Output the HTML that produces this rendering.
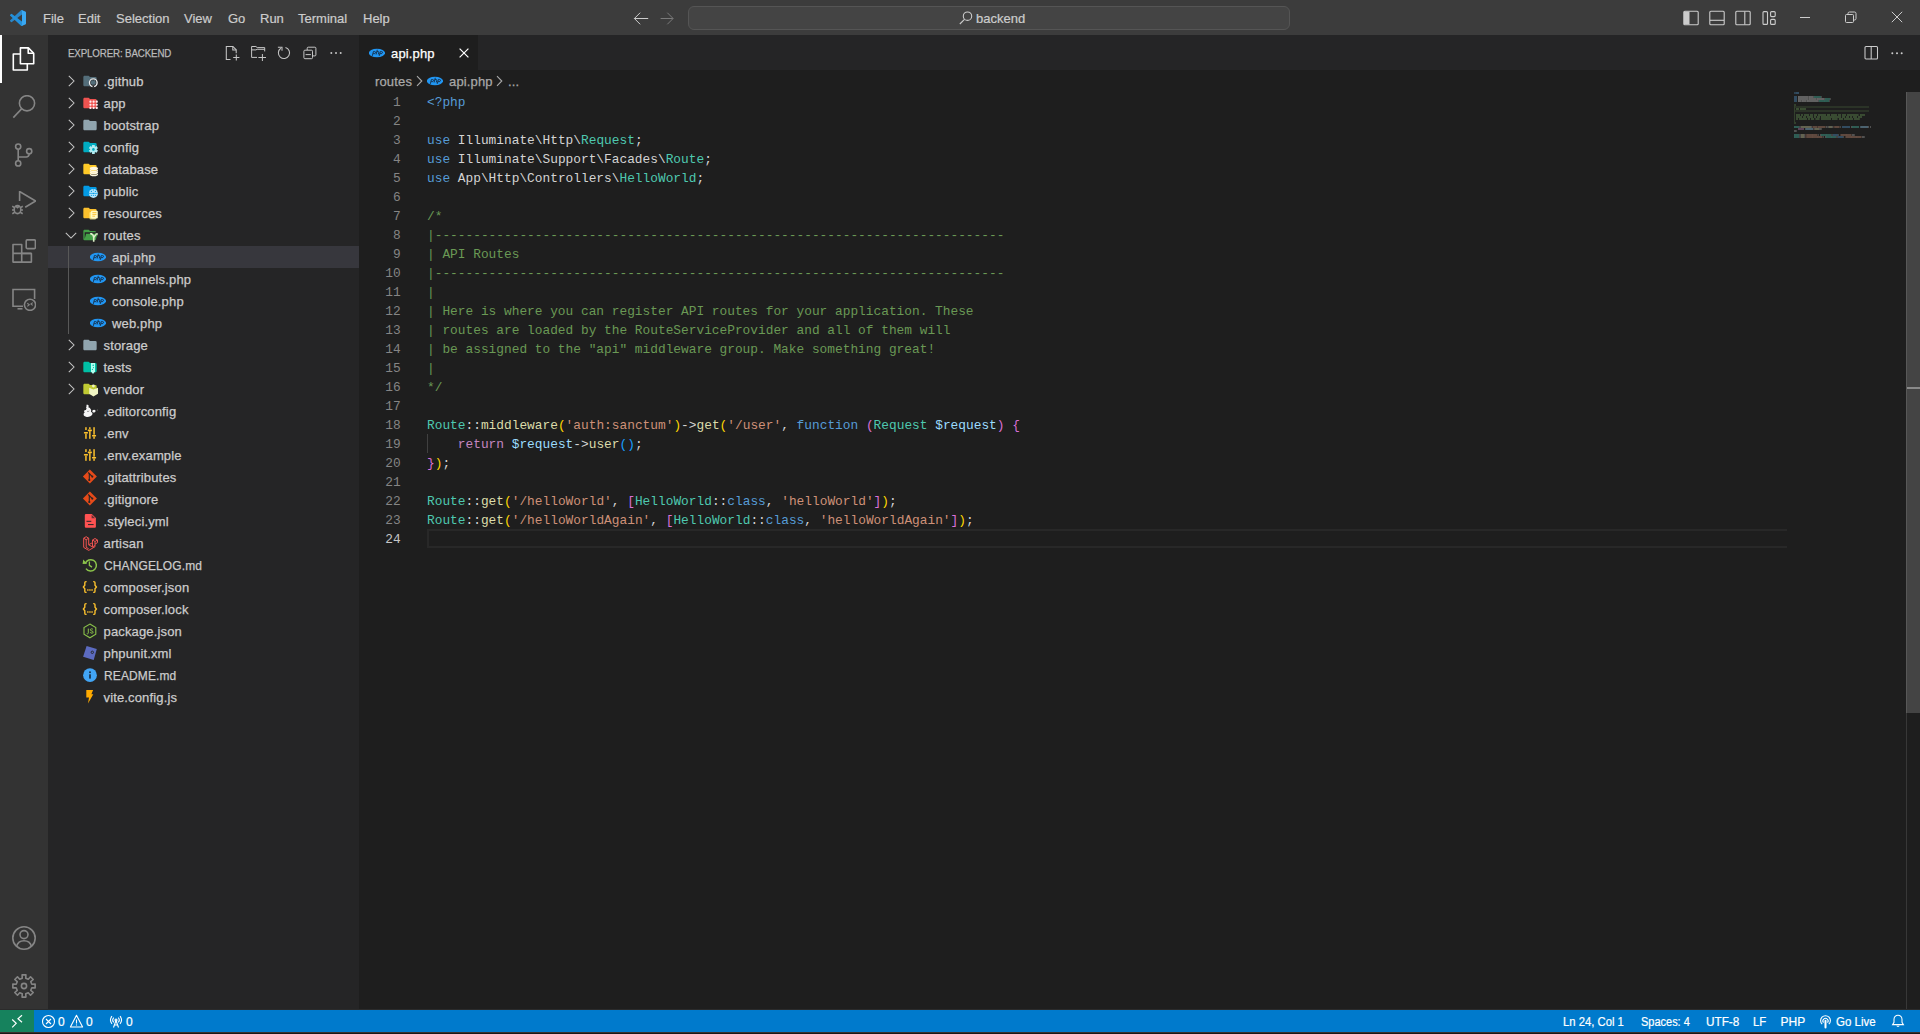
<!DOCTYPE html><html><head><meta charset="utf-8"><title>api.php - backend</title><style>
*{margin:0;padding:0;box-sizing:border-box}
html,body{width:1920px;height:1034px;overflow:hidden;background:#1e1e1e;font-family:"Liberation Sans",sans-serif;font-size:13px;color:#cccccc}
div,span,svg{position:absolute}
.t{white-space:pre}
#title{left:0;top:0;width:1920px;height:35px;background:#3c3c3c}
#act{left:0;top:35px;width:48px;height:974px;background:#333333}
#side{left:48px;top:35px;width:311px;height:974px;background:#252526}
#sash{left:359px;top:35px;width:1px;height:974px;background:#1e1e1e}
#editor{left:360px;top:35px;width:1560px;height:974px;background:#1e1e1e}
#status{left:0;top:1010px;width:1920px;height:22px;background:#007acc;color:#fff;font-size:12px}
#bottom{left:0;top:1032px;width:1920px;height:2px;background:#181818;border-top:1px solid #3a322e}
#sline{left:0;top:1009px;width:1920px;height:1px;background:#2b2b2b}
.menu{top:1px;height:35px;line-height:36px;color:#cccccc;font-size:13px;white-space:pre;-webkit-text-stroke:0.2px currentColor}
.lbl{height:22px;line-height:22px;color:#cccccc;font-size:13px;white-space:pre;-webkit-text-stroke:0.25px currentColor;letter-spacing:0.15px}
.code{font-family:"Liberation Mono",monospace;font-size:12.83px;white-space:pre;line-height:19px;height:19px}
.ln{width:41px;text-align:right;color:#858585;font-family:"Liberation Mono",monospace;font-size:12.83px;line-height:19px;height:19px}
.st{top:0;height:22px;line-height:23px;white-space:pre;color:#fff;font-size:12px;-webkit-text-stroke:0.2px currentColor}
</style></head><body>
<div id="title">
<svg style="left:10px;top:10px" width="16" height="16" viewBox="0 0 100 100">
<path fill="#2a86c8" d="M96.46 10.8L75.86.87a6.23 6.23 0 0 0-7.1 1.2L1.3 63.6a4.16 4.16 0 0 0 0 6.16l5.5 5a4.16 4.16 0 0 0 5.32.24L93.3 13.4a4.13 4.13 0 0 1 6.7 3.2v-.24a6.25 6.25 0 0 0-3.54-5.56z"/>
<path fill="#2291dd" d="M96.46 89.2L75.86 99.13a6.23 6.23 0 0 1-7.1-1.2L1.3 36.4a4.16 4.16 0 0 1 0-6.16l5.5-5a4.16 4.16 0 0 1 5.32-.24L93.3 86.6a4.13 4.13 0 0 0 6.7-3.2v.24a6.25 6.25 0 0 1-3.54 5.56z"/>
<path fill="#3aa8f2" d="M75.86 99.13a6.24 6.24 0 0 1-7.1-1.2c2.3 2.3 6.24.67 6.24-2.58V4.65c0-3.25-3.94-4.88-6.24-2.58a6.24 6.24 0 0 1 7.1-1.2l20.6 9.9A6.25 6.25 0 0 1 100 16.3v67.4a6.25 6.25 0 0 1-3.54 5.63z"/>
</svg>
<div class="menu" style="left:43px">File</div>
<div class="menu" style="left:78px">Edit</div>
<div class="menu" style="left:116px">Selection</div>
<div class="menu" style="left:184px">View</div>
<div class="menu" style="left:228px">Go</div>
<div class="menu" style="left:260px">Run</div>
<div class="menu" style="left:298px">Terminal</div>
<div class="menu" style="left:363px">Help</div>
<svg style="left:632px;top:10px" width="18" height="18" viewBox="0 0 18 18" fill="none" stroke="#cccccc" stroke-width="1">
<path d="M2.2 8.5h14M8.2 2.7L2.4 8.5l5.8 5.8"/></svg>
<svg style="left:659px;top:10px" width="18" height="18" viewBox="0 0 18 18" fill="none" stroke="#7a7a7a" stroke-width="1">
<path d="M1.6 8.5h12.3M8.3 2.7l5.8 5.8-5.8 5.8"/></svg>
<div style="left:688px;top:6px;width:602px;height:24px;border:1px solid #555555;border-radius:6px;background:#444444"></div>
<svg style="left:958px;top:10px" width="16" height="16" viewBox="0 0 16 16" fill="none" stroke="#cccccc" stroke-width="1.1">
<circle cx="9.5" cy="6.2" r="4.2"/><path d="M6.5 9.3L1.8 14"/></svg>
<div class="menu" style="left:976px;color:#cccccc">backend</div>
<svg style="left:1682px;top:10px" width="18" height="16" viewBox="0 0 18 16">
<rect x="1.8" y="1.3" width="14.4" height="13.4" rx="1" fill="none" stroke="#cccccc" stroke-width="1.1"/>
<rect x="2" y="1.6" width="5.5" height="12.8" fill="#cccccc"/></svg>
<svg style="left:1708px;top:10px" width="18" height="16" viewBox="0 0 18 16" fill="none" stroke="#cccccc" stroke-width="1.1">
<rect x="1.8" y="1.3" width="14.4" height="13.4" rx="1"/><path d="M2 10.3h14"/></svg>
<svg style="left:1734px;top:10px" width="18" height="16" viewBox="0 0 18 16" fill="none" stroke="#cccccc" stroke-width="1.1">
<rect x="1.8" y="1.3" width="14.4" height="13.4" rx="1"/><path d="M10.8 1.5v13"/></svg>
<svg style="left:1761px;top:10px" width="18" height="16" viewBox="0 0 18 16" fill="none" stroke="#cccccc" stroke-width="1.1">
<rect x="2" y="1.6" width="4.5" height="12.8" rx="1"/><rect x="9.6" y="1.6" width="4.6" height="5" rx="1"/><rect x="9.6" y="9.4" width="4.6" height="5" rx="1"/></svg>
<div style="left:1800px;top:17px;width:10px;height:1px;background:#cccccc"></div>
<svg style="left:1844px;top:10px" width="14" height="14" viewBox="0 0 14 14" fill="none" stroke="#cccccc" stroke-width="1">
<rect x="1.5" y="4.5" width="8" height="8" rx="1"/><path d="M4 4.5V3.5a1.5 1.5 0 0 1 1.5-1.5h5A1.5 1.5 0 0 1 12 3.5v5a1.5 1.5 0 0 1-1.5 1.5H9.5"/></svg>
<svg style="left:1891px;top:11px" width="12" height="12" viewBox="0 0 12 12" fill="none" stroke="#cccccc" stroke-width="1">
<path d="M0.8 0.8L11.2 11.2M11.2 0.8L0.8 11.2"/></svg>
</div>
<div id="act">
<div style="left:0;top:0;width:2px;height:48px;background:#ffffff"></div>
<svg style="left:12px;top:12px" width="24" height="24" viewBox="0 0 24 24" fill="none" stroke="#ffffff" stroke-width="1.6" stroke-linejoin="round">
<path d="M8.4 16.8V0.9h8l5.3 5.3v10.6z"/><path d="M16.2 1v5.3h5.4"/><path d="M8.4 7H1.3v16h14v-6.2"/></svg>
<svg style="left:12px;top:60px" width="24" height="24" viewBox="0 0 24 24" fill="none" stroke="#858585" stroke-width="1.6">
<circle cx="15" cy="8.3" r="7.6"/><path d="M9.6 13.9L1.3 22.6"/></svg>
<svg style="left:12px;top:108px" width="24" height="24" viewBox="0 0 24 24" fill="none" stroke="#858585" stroke-width="1.6">
<circle cx="6.2" cy="3.6" r="2.6"/><circle cx="17.2" cy="8.2" r="2.6"/><circle cx="6.2" cy="20.4" r="2.6"/>
<path d="M6.2 6.2V17.8"/><path d="M17.2 10.8v0.2a3 3 0 0 1-3 3H6.2"/></svg>
<svg style="left:12px;top:156px" width="24" height="24" viewBox="0 0 24 24" fill="none" stroke="#858585" stroke-width="1.6" stroke-linejoin="round">
<path d="M7.6 10V0.5L23.6 10 13.2 16.3"/>
<ellipse cx="5.5" cy="18.6" rx="3.3" ry="4"/><path d="M0.2 15.2l2.3 1.4M10.8 15.2l-2.3 1.4M0 19h2.2M11 19H8.8M0.3 22.8l2.4-1.5M10.7 22.8l-2.4-1.5M3.6 14.8l1.9 1.8 1.9-1.8"/></svg>
<svg style="left:12px;top:204px" width="24" height="24" viewBox="0 0 24 24" fill="none" stroke="#858585" stroke-width="1.6" stroke-linejoin="round">
<path d="M1 5.5h8.7v9h9.7v8.6H1z"/><path d="M1 14.4h18.4M9.7 14.4v8.7"/><rect x="14.2" y="0.9" width="9.2" height="8.7" rx="1"/></svg>
<svg style="left:12px;top:252px" width="24" height="24" viewBox="0 0 24 24" fill="none" stroke="#858585" stroke-width="1.6">
<path d="M11 19.2H1V2.5h21.6v9.5"/><path d="M5.5 21.8h5"/><circle cx="18" cy="17.8" r="5.6"/>
<path d="M15.3 16.2l2 1.6-2 1.6M20.7 15.6l-1.8 1.4 1.8 1.4" stroke-width="1.1"/></svg>
<svg style="left:12px;top:891px" width="24" height="24" viewBox="0 0 24 24" fill="none" stroke="#858585" stroke-width="1.6">
<circle cx="12" cy="12" r="11.2"/><circle cx="12" cy="8.6" r="4"/><path d="M4.5 20.5c1-3.8 3.8-5.8 7.5-5.8s6.5 2 7.5 5.8"/></svg>
<svg style="left:12px;top:939px" width="24" height="24" viewBox="0 0 24 24" fill="none" stroke="#858585" stroke-width="1.6" stroke-linejoin="round">
<path d="M19.81 10.25 L23.14 10.09 L23.14 13.91 L19.81 13.75 L18.76 16.29 L21.23 18.52 L18.52 21.23 L16.29 18.76 L13.75 19.81 L13.91 23.14 L10.09 23.14 L10.25 19.81 L7.71 18.76 L5.48 21.23 L2.77 18.52 L5.24 16.29 L4.19 13.75 L0.86 13.91 L0.86 10.09 L4.19 10.25 L5.24 7.71 L2.77 5.48 L5.48 2.77 L7.71 5.24 L10.25 4.19 L10.09 0.86 L13.91 0.86 L13.75 4.19 L16.29 5.24 L18.52 2.77 L21.23 5.48 L18.76 7.71Z"/><circle cx="12" cy="12" r="2.6"/></svg>
</div>
<div id="side">
<div class="lbl t" style="left:20px;top:7px;font-size:11px;letter-spacing:-0.15px;transform:scaleX(0.885);transform-origin:0 0;color:#bbbbbb">EXPLORER: BACKEND</div>
<svg style="left:176px;top:10px" width="16" height="16" viewBox="0 0 16 16" fill="none" stroke="#c5c5c5" stroke-width="1.05">
<path d="M6.5 14.5H2.3V1.5h6.6l3.3 3.3v3.4"/><path d="M8.8 1.5v3.4h3.4"/><path d="M12.3 9.4v6.2M9.2 12.5h6.2"/></svg>
<svg style="left:202px;top:10px" width="16" height="16" viewBox="0 0 16 16" fill="none" stroke="#c5c5c5" stroke-width="1">
<path d="M7 12.4H1.6V1.5h4.3l1.3 1.1h7.5v3.8"/><path d="M1.6 4.9h4.3l1.3-0.6h7.5"/><path d="M12.4 9v7M8.4 12.5h8"/></svg>
<svg style="left:228px;top:10px" width="16" height="16" viewBox="0 0 16 16" fill="none" stroke="#c5c5c5" stroke-width="1.05">
<path d="M9.45 2.5A5.6 5.6 0 1 1 4.8 3.3"/><path d="M1.9 2.3H6v3.5"/></svg>
<svg style="left:254px;top:10px" width="16" height="16" viewBox="0 0 16 16" fill="none" stroke="#c5c5c5" stroke-width="1">
<path d="M5.2 5V3.2a1 1 0 0 1 1-1h6.7a1 1 0 0 1 1 1v6.7a1 1 0 0 1-1 1H10.5"/><rect x="1.9" y="5.2" width="8.6" height="8.5" rx="1"/><path d="M3.6 9.6h5.3"/></svg>
<svg style="left:280px;top:10px" width="16" height="16" viewBox="0 0 16 16" fill="#c5c5c5">
<circle cx="3.3" cy="8" r="1"/><circle cx="8" cy="8" r="1"/><circle cx="12.7" cy="8" r="1"/></svg>
<div style="left:15px;top:38px;width:16px;height:16px"><svg width="16" height="16" viewBox="0 0 16 16" fill="none" stroke="#c5c5c5" stroke-width="1.05"><path d="M5.8 2.8L11 8l-5.2 5.2"/></svg></div>
<div style="left:34px;top:38px;width:16px;height:16px"><svg width="16" height="16" viewBox="0 0 24 24"><path fill="#546e7a" d="M10 4H4c-1.11 0-2 .89-2 2v12c0 1.097.903 2 2 2h16c1.097 0 2-.903 2-2V8a2 2 0 0 0-2-2h-8l-2-2z"/><g transform="scale(1.5)"><circle cx="11.3" cy="9.9" r="4.5" fill="#252526"/><circle cx="11.3" cy="9.7" r="3.8" fill="none" stroke="#eceff1" stroke-width="1.4"/><path d="M9.3 8.2l0.2-1.6 1.1 0.9h1.4l1.1-0.9 0.2 1.6c0.4 0.5 0.5 1 0.5 1.5 0 1.4-1 2-2.5 2s-2.5-0.6-2.5-2c0-0.5 0.1-1 0.5-1.5z" fill="#546e7a"/><rect x="10.5" y="12.6" width="1.6" height="2" fill="#252526"/></g></svg></div>
<div class="lbl" style="left:55.5px;top:36px">.github</div>
<div style="left:15px;top:60px;width:16px;height:16px"><svg width="16" height="16" viewBox="0 0 16 16" fill="none" stroke="#c5c5c5" stroke-width="1.05"><path d="M5.8 2.8L11 8l-5.2 5.2"/></svg></div>
<div style="left:34px;top:60px;width:16px;height:16px"><svg width="16" height="16" viewBox="0 0 24 24"><path fill="#ef5350" d="M10 4H4c-1.11 0-2 .89-2 2v12c0 1.097.903 2 2 2h16c1.097 0 2-.903 2-2V8a2 2 0 0 0-2-2h-8l-2-2z"/><g transform="scale(1.5)"><rect x="7.40" y="5.60" width="2.1" height="2.1" rx="0.7" fill="#ffebee"/><rect x="7.40" y="8.70" width="2.1" height="2.1" rx="0.7" fill="#ffebee"/><rect x="7.40" y="11.80" width="2.1" height="2.1" rx="0.7" fill="#ffebee"/><rect x="10.55" y="5.60" width="2.1" height="2.1" rx="0.7" fill="#ffebee"/><rect x="10.55" y="8.70" width="2.1" height="2.1" rx="0.7" fill="#ffebee"/><rect x="10.55" y="11.80" width="2.1" height="2.1" rx="0.7" fill="#ffebee"/><rect x="13.70" y="5.60" width="2.1" height="2.1" rx="0.7" fill="#ffebee"/><rect x="13.70" y="8.70" width="2.1" height="2.1" rx="0.7" fill="#ffebee"/><rect x="13.70" y="11.80" width="2.1" height="2.1" rx="0.7" fill="#ffebee"/></g></svg></div>
<div class="lbl" style="left:55.5px;top:58px">app</div>
<div style="left:15px;top:82px;width:16px;height:16px"><svg width="16" height="16" viewBox="0 0 16 16" fill="none" stroke="#c5c5c5" stroke-width="1.05"><path d="M5.8 2.8L11 8l-5.2 5.2"/></svg></div>
<div style="left:34px;top:82px;width:16px;height:16px"><svg width="16" height="16" viewBox="0 0 24 24"><path fill="#90a4ae" d="M10 4H4c-1.11 0-2 .89-2 2v12c0 1.097.903 2 2 2h16c1.097 0 2-.903 2-2V8a2 2 0 0 0-2-2h-8l-2-2z"/></svg></div>
<div class="lbl" style="left:55.5px;top:80px">bootstrap</div>
<div style="left:15px;top:104px;width:16px;height:16px"><svg width="16" height="16" viewBox="0 0 16 16" fill="none" stroke="#c5c5c5" stroke-width="1.05"><path d="M5.8 2.8L11 8l-5.2 5.2"/></svg></div>
<div style="left:34px;top:104px;width:16px;height:16px"><svg width="16" height="16" viewBox="0 0 24 24"><path fill="#00acc1" d="M10 4H4c-1.11 0-2 .89-2 2v12c0 1.097.903 2 2 2h16c1.097 0 2-.903 2-2V8a2 2 0 0 0-2-2h-8l-2-2z"/><g transform="scale(1.5)"><path d="M10.10 7.37 L10.01 5.91 L12.79 5.91 L12.70 7.37 L13.38 7.76 L14.59 6.95 L15.98 9.36 L14.68 10.01 L14.68 10.79 L15.98 11.44 L14.59 13.85 L13.38 13.04 L12.70 13.43 L12.79 14.89 L10.01 14.89 L10.10 13.43 L9.42 13.04 L8.21 13.85 L6.82 11.44 L8.12 10.79 L8.12 10.01 L6.82 9.36 L8.21 6.95 L9.42 7.76Z" fill="#b2ebf2"/><circle cx="11.4" cy="10.4" r="1.3" fill="#00acc1"/></g></svg></div>
<div class="lbl" style="left:55.5px;top:102px">config</div>
<div style="left:15px;top:126px;width:16px;height:16px"><svg width="16" height="16" viewBox="0 0 16 16" fill="none" stroke="#c5c5c5" stroke-width="1.05"><path d="M5.8 2.8L11 8l-5.2 5.2"/></svg></div>
<div style="left:34px;top:126px;width:16px;height:16px"><svg width="16" height="16" viewBox="0 0 24 24"><path fill="#ffca28" d="M10 4H4c-1.11 0-2 .89-2 2v12c0 1.097.903 2 2 2h16c1.097 0 2-.903 2-2V8a2 2 0 0 0-2-2h-8l-2-2z"/><g transform="scale(1.5)"><ellipse cx="11.9" cy="7.6" rx="4.1" ry="1.8" fill="#fff8e1"/><path d="M7.8 10v1.4c0 1 1.8 1.8 4.1 1.8s4.1-0.8 4.1-1.8V10c-0.8 0.8-2.4 1.3-4.1 1.3S8.6 10.8 7.8 10z" fill="#fff8e1"/><path d="M7.8 8.6v1c0 1 1.8 1.8 4.1 1.8s4.1-0.8 4.1-1.8v-1c-0.8 0.8-2.4 1.3-4.1 1.3S8.6 9.4 7.8 8.6z" fill="#fff8e1"/><path d="M7.8 12.4v1c0 1 1.8 1.8 4.1 1.8s4.1-0.8 4.1-1.8v-1c-0.8 0.8-2.4 1.3-4.1 1.3S8.6 13.2 7.8 12.4z" fill="#fff8e1"/></g></svg></div>
<div class="lbl" style="left:55.5px;top:124px">database</div>
<div style="left:15px;top:148px;width:16px;height:16px"><svg width="16" height="16" viewBox="0 0 16 16" fill="none" stroke="#c5c5c5" stroke-width="1.05"><path d="M5.8 2.8L11 8l-5.2 5.2"/></svg></div>
<div style="left:34px;top:148px;width:16px;height:16px"><svg width="16" height="16" viewBox="0 0 24 24"><path fill="#039be5" d="M10 4H4c-1.11 0-2 .89-2 2v12c0 1.097.903 2 2 2h16c1.097 0 2-.903 2-2V8a2 2 0 0 0-2-2h-8l-2-2z"/><g transform="scale(1.5)"><circle cx="11.4" cy="10.4" r="4.5" fill="#b3e5fc"/><path d="M6.9 10.4h9M11.4 6.2v1.6" stroke="#039be5" stroke-width="0.7" fill="none"/><circle cx="9.4" cy="8.4" r="0.6" fill="#039be5"/><circle cx="13.4" cy="8.4" r="0.6" fill="#039be5"/><circle cx="9.4" cy="12.3" r="0.6" fill="#039be5"/><circle cx="11.4" cy="12.3" r="0.6" fill="#039be5"/><circle cx="13.4" cy="12.3" r="0.6" fill="#039be5"/><circle cx="11.4" cy="10.4" r="0.6" fill="#039be5"/></g></svg></div>
<div class="lbl" style="left:55.5px;top:146px">public</div>
<div style="left:15px;top:170px;width:16px;height:16px"><svg width="16" height="16" viewBox="0 0 16 16" fill="none" stroke="#c5c5c5" stroke-width="1.05"><path d="M5.8 2.8L11 8l-5.2 5.2"/></svg></div>
<div style="left:34px;top:170px;width:16px;height:16px"><svg width="16" height="16" viewBox="0 0 24 24"><path fill="#fbc02d" d="M10 4H4c-1.11 0-2 .89-2 2v12c0 1.097.903 2 2 2h16c1.097 0 2-.903 2-2V8a2 2 0 0 0-2-2h-8l-2-2z"/><g transform="scale(1.5)"><rect x="7.5" y="7" width="6.5" height="7.6" rx="1" fill="#fff59d" opacity="0.75"/><rect x="9" y="5.8" width="6.8" height="7.8" rx="1" fill="#fff9c4"/><path d="M10.4 7.6h4M10.4 9.4h4M10.4 11.2h2.6" stroke="#fbc02d" stroke-width="0.9"/></g></svg></div>
<div class="lbl" style="left:55.5px;top:168px">resources</div>
<div style="left:15px;top:192px;width:16px;height:16px"><svg width="16" height="16" viewBox="0 0 16 16" fill="none" stroke="#c5c5c5" stroke-width="1.05"><path d="M2.8 5.8L8 11l5.2-5.2"/></svg></div>
<div style="left:34px;top:192px;width:16px;height:16px"><svg width="16" height="16" viewBox="0 0 24 24"><path fill="#43a047" d="M19 20H4a2 2 0 0 1-2-2V6c0-1.11.89-2 2-2h6l2 2h7a2 2 0 0 1 2 2H4v10l2.14-8h17.07l-2.28 8.5c-.23.87-1.01 1.5-1.93 1.5z"/><g transform="scale(1.5)"><path d="M9 6.8c1.6 0.6 2.7 1.8 2.7 3.6v4.3" stroke="#dcedc8" stroke-width="1.6" fill="none"/><path d="M7.9 6h2.6l-1.6 2z" fill="#dcedc8"/><path d="M11.8 10.2l2.2-2.8" stroke="#dcedc8" stroke-width="1.5"/><path d="M15.8 6l-0.4 2.6-2.2-2.2z" fill="#dcedc8"/></g></svg></div>
<div class="lbl" style="left:55.5px;top:190px">routes</div>
<div style="left:0;top:211px;width:311px;height:22px;background:#37373d"></div>
<div style="left:42px;top:214px;width:16px;height:16px"><svg width="16" height="16" viewBox="0 0 16 16"><ellipse cx="7.95" cy="8" rx="8.1" ry="4.2" fill="#2196f3"/><path d="M3.3 10.9L4.4 6.6h1.3c0.7 0 1 0.4 0.85 1-0.15 0.7-0.6 1.1-1.3 1.1H4.1M7.1 9.5L8.3 4.8M7.9 6.6h1.2c0.6 0 0.8 0.3 0.7 0.7L9.3 9.5M10.2 10.9l1.1-4.3h1.3c0.7 0 1 0.4 0.85 1-0.15 0.7-0.6 1.1-1.3 1.1H11" fill="none" stroke="#15263a" stroke-width="0.85"/></svg></div>
<div class="lbl" style="left:64px;top:212px">api.php</div>
<div style="left:42px;top:236px;width:16px;height:16px"><svg width="16" height="16" viewBox="0 0 16 16"><ellipse cx="7.95" cy="8" rx="8.1" ry="4.2" fill="#2196f3"/><path d="M3.3 10.9L4.4 6.6h1.3c0.7 0 1 0.4 0.85 1-0.15 0.7-0.6 1.1-1.3 1.1H4.1M7.1 9.5L8.3 4.8M7.9 6.6h1.2c0.6 0 0.8 0.3 0.7 0.7L9.3 9.5M10.2 10.9l1.1-4.3h1.3c0.7 0 1 0.4 0.85 1-0.15 0.7-0.6 1.1-1.3 1.1H11" fill="none" stroke="#15263a" stroke-width="0.85"/></svg></div>
<div class="lbl" style="left:64px;top:234px">channels.php</div>
<div style="left:42px;top:258px;width:16px;height:16px"><svg width="16" height="16" viewBox="0 0 16 16"><ellipse cx="7.95" cy="8" rx="8.1" ry="4.2" fill="#2196f3"/><path d="M3.3 10.9L4.4 6.6h1.3c0.7 0 1 0.4 0.85 1-0.15 0.7-0.6 1.1-1.3 1.1H4.1M7.1 9.5L8.3 4.8M7.9 6.6h1.2c0.6 0 0.8 0.3 0.7 0.7L9.3 9.5M10.2 10.9l1.1-4.3h1.3c0.7 0 1 0.4 0.85 1-0.15 0.7-0.6 1.1-1.3 1.1H11" fill="none" stroke="#15263a" stroke-width="0.85"/></svg></div>
<div class="lbl" style="left:64px;top:256px">console.php</div>
<div style="left:42px;top:280px;width:16px;height:16px"><svg width="16" height="16" viewBox="0 0 16 16"><ellipse cx="7.95" cy="8" rx="8.1" ry="4.2" fill="#2196f3"/><path d="M3.3 10.9L4.4 6.6h1.3c0.7 0 1 0.4 0.85 1-0.15 0.7-0.6 1.1-1.3 1.1H4.1M7.1 9.5L8.3 4.8M7.9 6.6h1.2c0.6 0 0.8 0.3 0.7 0.7L9.3 9.5M10.2 10.9l1.1-4.3h1.3c0.7 0 1 0.4 0.85 1-0.15 0.7-0.6 1.1-1.3 1.1H11" fill="none" stroke="#15263a" stroke-width="0.85"/></svg></div>
<div class="lbl" style="left:64px;top:278px">web.php</div>
<div style="left:15px;top:302px;width:16px;height:16px"><svg width="16" height="16" viewBox="0 0 16 16" fill="none" stroke="#c5c5c5" stroke-width="1.05"><path d="M5.8 2.8L11 8l-5.2 5.2"/></svg></div>
<div style="left:34px;top:302px;width:16px;height:16px"><svg width="16" height="16" viewBox="0 0 24 24"><path fill="#90a4ae" d="M10 4H4c-1.11 0-2 .89-2 2v12c0 1.097.903 2 2 2h16c1.097 0 2-.903 2-2V8a2 2 0 0 0-2-2h-8l-2-2z"/></svg></div>
<div class="lbl" style="left:55.5px;top:300px">storage</div>
<div style="left:15px;top:324px;width:16px;height:16px"><svg width="16" height="16" viewBox="0 0 16 16" fill="none" stroke="#c5c5c5" stroke-width="1.05"><path d="M5.8 2.8L11 8l-5.2 5.2"/></svg></div>
<div style="left:34px;top:324px;width:16px;height:16px"><svg width="16" height="16" viewBox="0 0 24 24"><path fill="#00bfa5" d="M10 4H4c-1.11 0-2 .89-2 2v12c0 1.097.903 2 2 2h16c1.097 0 2-.903 2-2V8a2 2 0 0 0-2-2h-8l-2-2z"/><g transform="scale(1.5)"><path d="M9 4h4v8.6l-2 2.4-2-2.4z" fill="#b2fef0"/><circle cx="11.2" cy="6.2" r="0.8" fill="#00bfa5"/><circle cx="11.5" cy="8.6" r="0.6" fill="#00bfa5"/><circle cx="10.4" cy="10.4" r="0.6" fill="#00bfa5"/></g></svg></div>
<div class="lbl" style="left:55.5px;top:322px">tests</div>
<div style="left:15px;top:346px;width:16px;height:16px"><svg width="16" height="16" viewBox="0 0 16 16" fill="none" stroke="#c5c5c5" stroke-width="1.05"><path d="M5.8 2.8L11 8l-5.2 5.2"/></svg></div>
<div style="left:34px;top:346px;width:16px;height:16px"><svg width="16" height="16" viewBox="0 0 24 24"><path fill="#c0ca33" d="M10 4H4c-1.11 0-2 .89-2 2v12c0 1.097.903 2 2 2h16c1.097 0 2-.903 2-2V8a2 2 0 0 0-2-2h-8l-2-2z"/><g transform="scale(1.5)"><circle cx="11.4" cy="5" r="1.4" fill="#f0f4c3"/><path d="M7.2 6.8l4.2 1.8 4.6-1.8v6l-4.6 2.6-4.2-2.6z" fill="#f0f4c3"/></g></svg></div>
<div class="lbl" style="left:55.5px;top:344px">vendor</div>
<div style="left:34px;top:368px;width:16px;height:16px"><svg width="16" height="16" viewBox="0 0 16 16"><path d="M4.5 1.8c0.9-0.4 2 0 2.2 1 0.1 0.6-0.1 1.1-0.5 1.5 1.2 0.3 2.2 1.1 2.7 2.1 0.4 0.8 0.4 1.8 0 2.6 1.3 0.1 2 1.4 1.4 2.6-0.8 1.6-3.2 2.5-5.6 2.3-1.9-0.2-3.3-1-3.1-2.6 0.1-0.9 0.7-1.6 1.3-2-0.7-0.3-1-1-0.7-1.6 0.3-0.6 1.1-0.8 1.8-0.5 0-0.6 0.2-1.2 0.6-1.7-0.6-0.6-0.6-1.5-0.1-2z" fill="#f5f5f5"/><path d="M10.6 7.2c0.9-0.9 2.5-0.7 2.9 0.3 0.3 0.8-0.3 1.8-1.3 2-0.9 0.2-1.8-0.3-1.9-1.1z" fill="#f5f5f5"/><circle cx="15.3" cy="7.1" r="0.5" fill="#888"/><path d="M5 8.2c0.8 0.4 1.6 0.3 2.3-0.3" stroke="#444" stroke-width="0.6" fill="none"/></svg></div>
<div class="lbl" style="left:55.5px;top:366px">.editorconfig</div>
<div style="left:34px;top:390px;width:16px;height:16px"><svg width="16" height="16" viewBox="0 0 16 16" fill="#fbc02d"><rect x="3.2" y="2.2" width="1.5" height="2.8"/><rect x="3.2" y="8.5" width="1.5" height="5.3"/><rect x="1.9" y="7" width="4.1" height="1.6" rx="0.4"/><rect x="7.1" y="2.2" width="1.5" height="2"/><rect x="7.1" y="6.1" width="1.5" height="7.7"/><rect x="5.8" y="4.6" width="4.1" height="1.6" rx="0.4"/><rect x="11.3" y="2.2" width="1.5" height="7.5"/><rect x="11.3" y="11.4" width="1.5" height="2.4"/><rect x="10" y="9.9" width="4.1" height="1.6" rx="0.4"/></svg></div>
<div class="lbl" style="left:55.5px;top:388px">.env</div>
<div style="left:34px;top:412px;width:16px;height:16px"><svg width="16" height="16" viewBox="0 0 16 16" fill="#fbc02d"><rect x="3.2" y="2.2" width="1.5" height="2.8"/><rect x="3.2" y="8.5" width="1.5" height="5.3"/><rect x="1.9" y="7" width="4.1" height="1.6" rx="0.4"/><rect x="7.1" y="2.2" width="1.5" height="2"/><rect x="7.1" y="6.1" width="1.5" height="7.7"/><rect x="5.8" y="4.6" width="4.1" height="1.6" rx="0.4"/><rect x="11.3" y="2.2" width="1.5" height="7.5"/><rect x="11.3" y="11.4" width="1.5" height="2.4"/><rect x="10" y="9.9" width="4.1" height="1.6" rx="0.4"/></svg></div>
<div class="lbl" style="left:55.5px;top:410px">.env.example</div>
<div style="left:34px;top:434px;width:16px;height:16px"><svg width="16" height="16" viewBox="0 0 16 16"><path d="M7.9 0.6l7 7-7 7-7-7z" fill="#e64a19"/><path d="M6.2 3.5L9.8 7.1M7.3 4.6v6.2" stroke="#252526" stroke-width="1.1" fill="none"/><circle cx="7.3" cy="11" r="1.1" fill="#252526"/><circle cx="10.3" cy="7.6" r="1.1" fill="#252526"/></svg></div>
<div class="lbl" style="left:55.5px;top:432px">.gitattributes</div>
<div style="left:34px;top:456px;width:16px;height:16px"><svg width="16" height="16" viewBox="0 0 16 16"><path d="M7.9 0.6l7 7-7 7-7-7z" fill="#e64a19"/><path d="M6.2 3.5L9.8 7.1M7.3 4.6v6.2" stroke="#252526" stroke-width="1.1" fill="none"/><circle cx="7.3" cy="11" r="1.1" fill="#252526"/><circle cx="10.3" cy="7.6" r="1.1" fill="#252526"/></svg></div>
<div class="lbl" style="left:55.5px;top:454px">.gitignore</div>
<div style="left:34px;top:478px;width:16px;height:16px"><svg width="16" height="16" viewBox="0 0 16 16"><path d="M4 1h5.8l4.1 4.1v8.6a1 1 0 0 1-1 1H4a1.2 1.2 0 0 1-1.2-1.2V2.2A1.2 1.2 0 0 1 4 1z" fill="#ff5252"/><path d="M4.5 8.3h4.8M6 11.6h5.6" stroke="#252526" stroke-width="1"/><path d="M9.6 1.8v3.5h3.5z" fill="#252526" opacity="0.7"/></svg></div>
<div class="lbl" style="left:55.5px;top:476px">.styleci.yml</div>
<div style="left:34px;top:500px;width:16px;height:16px"><svg width="16" height="16" viewBox="0 0 16 16" fill="none" stroke="#ef5350" stroke-width="1" stroke-linejoin="round"><path d="M1.7 3.2l2.5-1.5 2.5 1.5v6.6l3.8-2.2V5l2.5-1.5L15.5 5v2.6l-2.5 1.5v2.6l-6.3 3.7-5-3z"/><path d="M1.7 3.2l2.5 1.5 2.5-1.5M4.2 4.7v7.6l2.5 1.5M6.7 9.8l3.8 2.1 2.5-1.4M10.5 5l2.5 1.5L15.5 5M13 6.5v2.6M10.5 7.6v4.3"/></svg></div>
<div class="lbl" style="left:55.5px;top:498px">artisan</div>
<div style="left:34px;top:522px;width:16px;height:16px"><svg width="16" height="16" viewBox="0 0 16 16" fill="none" stroke="#8bc34a" stroke-width="1.5"><path d="M3.3 6.5A5.7 5.7 0 1 1 4 11.6"/><path d="M1.2 2.5l3.8 4.2-4.4 0.4z" fill="#8bc34a" stroke="none"/><path d="M7.4 4.5v3.8l2.6 1.8" stroke-width="1.3"/></svg></div>
<div class="lbl" style="left:55.5px;top:520px;transform:scaleX(0.92);transform-origin:0 0">CHANGELOG.md</div>
<div style="left:34px;top:544px;width:16px;height:16px"><svg width="16" height="16" viewBox="0 0 16 16" fill="none" stroke="#fbc02d" stroke-width="1.4"><path d="M4.6 2.6H4a1.2 1.2 0 0 0-1.2 1.2v2.5L1.4 8l1.4 1.7v2.5A1.2 1.2 0 0 0 4 13.4h.6M11.2 2.6h.6A1.2 1.2 0 0 1 13 3.8v2.5L14.4 8 13 9.7v2.5a1.2 1.2 0 0 1-1.2 1.2h-.6"/><path d="M5.7 11h.3M7.8 11h.3M9.9 11h.3" stroke-width="1.5" stroke-linecap="round"/></svg></div>
<div class="lbl" style="left:55.5px;top:542px">composer.json</div>
<div style="left:34px;top:566px;width:16px;height:16px"><svg width="16" height="16" viewBox="0 0 16 16" fill="none" stroke="#fbc02d" stroke-width="1.4"><path d="M4.6 2.6H4a1.2 1.2 0 0 0-1.2 1.2v2.5L1.4 8l1.4 1.7v2.5A1.2 1.2 0 0 0 4 13.4h.6M11.2 2.6h.6A1.2 1.2 0 0 1 13 3.8v2.5L14.4 8 13 9.7v2.5a1.2 1.2 0 0 1-1.2 1.2h-.6"/><path d="M5.7 11h.3M7.8 11h.3M9.9 11h.3" stroke-width="1.5" stroke-linecap="round"/></svg></div>
<div class="lbl" style="left:55.5px;top:564px">composer.lock</div>
<div style="left:34px;top:588px;width:16px;height:16px"><svg width="16" height="16" viewBox="0 0 16 16"><path d="M7.9 1.1l5.9 3.4v6.8L7.9 14.8 2 11.3V4.5z" fill="none" stroke="#8bc34a" stroke-width="1.1"/><path d="M6.3 5.6v4.3c0 0.9-0.8 1.1-1.5 0.7M11 6.5c-0.4-0.9-2.7-1-2.7 0.3 0 1.5 2.9 0.8 2.9 2.4 0 1.3-2.5 1.3-3.1-0.1" fill="none" stroke="#8bc34a" stroke-width="1"/></svg></div>
<div class="lbl" style="left:55.5px;top:586px">package.json</div>
<div style="left:34px;top:610px;width:16px;height:16px"><svg width="16" height="16" viewBox="0 0 16 16"><path d="M4.6 1.1l10.2 3-3.1 10.8L1.1 11.8z" fill="#5c6bc0"/><circle cx="10.3" cy="7.3" r="1.2" fill="none" stroke="#252526" stroke-width="0.9"/></svg></div>
<div class="lbl" style="left:55.5px;top:608px">phpunit.xml</div>
<div style="left:34px;top:632px;width:16px;height:16px"><svg width="16" height="16" viewBox="0 0 16 16"><circle cx="8" cy="8.2" r="6.9" fill="#42a5f5"/><rect x="7.1" y="7.3" width="1.8" height="4.3" fill="#1a3550"/><circle cx="8" cy="5.3" r="1" fill="#1a3550"/></svg></div>
<div class="lbl" style="left:55.5px;top:630px;transform:scaleX(0.92);transform-origin:0 0">README.md</div>
<div style="left:34px;top:654px;width:16px;height:16px"><svg width="16" height="16" viewBox="0 0 16 16"><path d="M4.3 0.9h6.8l-1.7 4.3h1.9L6 14.6l1-6.1H4.3z" fill="#ffab00"/></svg></div>
<div class="lbl" style="left:55.5px;top:652px">vite.config.js</div>
<div style="left:20px;top:211px;width:1px;height:88px;background:#585858"></div>
</div>
<div id="sash"></div>
<div id="editor">
<div style="left:0;top:0;width:1560px;height:35px;background:#252526"></div>
<div style="left:0;top:0;width:118px;height:35px;background:#1e1e1e"></div>
<div style="left:9px;top:10px;width:16px;height:16px"><svg width="16" height="16" viewBox="0 0 16 16"><ellipse cx="7.95" cy="8" rx="8.1" ry="4.2" fill="#2196f3"/><path d="M3.3 10.9L4.4 6.6h1.3c0.7 0 1 0.4 0.85 1-0.15 0.7-0.6 1.1-1.3 1.1H4.1M7.1 9.5L8.3 4.8M7.9 6.6h1.2c0.6 0 0.8 0.3 0.7 0.7L9.3 9.5M10.2 10.9l1.1-4.3h1.3c0.7 0 1 0.4 0.85 1-0.15 0.7-0.6 1.1-1.3 1.1H11" fill="none" stroke="#15263a" stroke-width="0.85"/></svg></div>
<div class="lbl" style="left:31px;top:8px;color:#ffffff">api.php</div>
<svg style="left:96px;top:10px" width="16" height="16" viewBox="0 0 16 16" fill="none" stroke="#ffffff" stroke-width="1.2">
<path d="M3.6 3.6l8.8 8.8M12.4 3.6l-8.8 8.8"/></svg>
<svg style="left:1503px;top:10px" width="16" height="16" viewBox="0 0 16 16" fill="none" stroke="#cccccc" stroke-width="1.05">
<rect x="2" y="1.5" width="12.5" height="12.5" rx="1"/><path d="M8.2 1.5v12.5"/></svg>
<svg style="left:1529px;top:10px" width="16" height="16" viewBox="0 0 16 16" fill="#cccccc">
<circle cx="3.3" cy="8.2" r="1"/><circle cx="8" cy="8.2" r="1"/><circle cx="12.7" cy="8.2" r="1"/></svg>
<div class="lbl" style="left:15px;top:36px;color:#a9a9a9">routes</div>
<svg style="left:51px;top:38px" width="16" height="16" viewBox="0 0 16 16" fill="none" stroke="#a9a9a9" stroke-width="1.1"><path d="M6 3.2L10.8 8 6 12.8"/></svg>
<div style="left:67px;top:38px;width:16px;height:16px"><svg width="16" height="16" viewBox="0 0 16 16"><ellipse cx="7.95" cy="8" rx="8.1" ry="4.2" fill="#2196f3"/><path d="M3.3 10.9L4.4 6.6h1.3c0.7 0 1 0.4 0.85 1-0.15 0.7-0.6 1.1-1.3 1.1H4.1M7.1 9.5L8.3 4.8M7.9 6.6h1.2c0.6 0 0.8 0.3 0.7 0.7L9.3 9.5M10.2 10.9l1.1-4.3h1.3c0.7 0 1 0.4 0.85 1-0.15 0.7-0.6 1.1-1.3 1.1H11" fill="none" stroke="#15263a" stroke-width="0.85"/></svg></div>
<div class="lbl" style="left:89px;top:36px;color:#a9a9a9">api.php</div>
<svg style="left:131px;top:38px" width="16" height="16" viewBox="0 0 16 16" fill="none" stroke="#a9a9a9" stroke-width="1.1"><path d="M6 3.2L10.8 8 6 12.8"/></svg>
<div class="lbl" style="left:148px;top:36px;color:#a9a9a9">...</div>
<div style="left:67px;top:494px;width:1360px;height:19px;border:2px solid #282828;border-right:none"></div>
<div style="left:67px;top:399px;width:1px;height:19px;background:#404040"></div>
<div class="ln" style="left:0;top:58px;left:-0.4px;color:#858585">1</div>
<div class="code" style="left:67px;top:58px"><span style="position:static;color:#569cd6">&lt;?php</span></div>
<div class="ln" style="left:0;top:77px;left:-0.4px;color:#858585">2</div>
<div class="ln" style="left:0;top:96px;left:-0.4px;color:#858585">3</div>
<div class="code" style="left:67px;top:96px"><span style="position:static;color:#569cd6">use</span><span style="position:static;color:#d4d4d4"> Illuminate\Http\</span><span style="position:static;color:#4ec9b0">Request</span><span style="position:static;color:#d4d4d4">;</span></div>
<div class="ln" style="left:0;top:115px;left:-0.4px;color:#858585">4</div>
<div class="code" style="left:67px;top:115px"><span style="position:static;color:#569cd6">use</span><span style="position:static;color:#d4d4d4"> Illuminate\Support\Facades\</span><span style="position:static;color:#4ec9b0">Route</span><span style="position:static;color:#d4d4d4">;</span></div>
<div class="ln" style="left:0;top:134px;left:-0.4px;color:#858585">5</div>
<div class="code" style="left:67px;top:134px"><span style="position:static;color:#569cd6">use</span><span style="position:static;color:#d4d4d4"> App\Http\Controllers\</span><span style="position:static;color:#4ec9b0">HelloWorld</span><span style="position:static;color:#d4d4d4">;</span></div>
<div class="ln" style="left:0;top:153px;left:-0.4px;color:#858585">6</div>
<div class="ln" style="left:0;top:172px;left:-0.4px;color:#858585">7</div>
<div class="code" style="left:67px;top:172px"><span style="position:static;color:#6a9955">/*</span></div>
<div class="ln" style="left:0;top:191px;left:-0.4px;color:#858585">8</div>
<div class="code" style="left:67px;top:191px"><span style="position:static;color:#6a9955">|--------------------------------------------------------------------------</span></div>
<div class="ln" style="left:0;top:210px;left:-0.4px;color:#858585">9</div>
<div class="code" style="left:67px;top:210px"><span style="position:static;color:#6a9955">| API Routes</span></div>
<div class="ln" style="left:0;top:229px;left:-0.4px;color:#858585">10</div>
<div class="code" style="left:67px;top:229px"><span style="position:static;color:#6a9955">|--------------------------------------------------------------------------</span></div>
<div class="ln" style="left:0;top:248px;left:-0.4px;color:#858585">11</div>
<div class="code" style="left:67px;top:248px"><span style="position:static;color:#6a9955">|</span></div>
<div class="ln" style="left:0;top:267px;left:-0.4px;color:#858585">12</div>
<div class="code" style="left:67px;top:267px"><span style="position:static;color:#6a9955">| Here is where you can register API routes for your application. These</span></div>
<div class="ln" style="left:0;top:286px;left:-0.4px;color:#858585">13</div>
<div class="code" style="left:67px;top:286px"><span style="position:static;color:#6a9955">| routes are loaded by the RouteServiceProvider and all of them will</span></div>
<div class="ln" style="left:0;top:305px;left:-0.4px;color:#858585">14</div>
<div class="code" style="left:67px;top:305px"><span style="position:static;color:#6a9955">| be assigned to the &quot;api&quot; middleware group. Make something great!</span></div>
<div class="ln" style="left:0;top:324px;left:-0.4px;color:#858585">15</div>
<div class="code" style="left:67px;top:324px"><span style="position:static;color:#6a9955">|</span></div>
<div class="ln" style="left:0;top:343px;left:-0.4px;color:#858585">16</div>
<div class="code" style="left:67px;top:343px"><span style="position:static;color:#6a9955">*/</span></div>
<div class="ln" style="left:0;top:362px;left:-0.4px;color:#858585">17</div>
<div class="ln" style="left:0;top:381px;left:-0.4px;color:#858585">18</div>
<div class="code" style="left:67px;top:381px"><span style="position:static;color:#4ec9b0">Route</span><span style="position:static;color:#d4d4d4">::</span><span style="position:static;color:#dcdcaa">middleware</span><span style="position:static;color:#ffd700">(</span><span style="position:static;color:#ce9178">&#x27;auth:sanctum&#x27;</span><span style="position:static;color:#ffd700">)</span><span style="position:static;color:#d4d4d4">-&gt;</span><span style="position:static;color:#dcdcaa">get</span><span style="position:static;color:#ffd700">(</span><span style="position:static;color:#ce9178">&#x27;/user&#x27;</span><span style="position:static;color:#d4d4d4">, </span><span style="position:static;color:#569cd6">function</span><span style="position:static;color:#d4d4d4"> </span><span style="position:static;color:#da70d6">(</span><span style="position:static;color:#4ec9b0">Request</span><span style="position:static;color:#d4d4d4"> </span><span style="position:static;color:#9cdcfe">$request</span><span style="position:static;color:#da70d6">)</span><span style="position:static;color:#d4d4d4"> </span><span style="position:static;color:#da70d6">{</span></div>
<div class="ln" style="left:0;top:400px;left:-0.4px;color:#858585">19</div>
<div class="code" style="left:67px;top:400px"><span style="position:static;color:#d4d4d4">    </span><span style="position:static;color:#c586c0">return</span><span style="position:static;color:#d4d4d4"> </span><span style="position:static;color:#9cdcfe">$request</span><span style="position:static;color:#d4d4d4">-&gt;</span><span style="position:static;color:#dcdcaa">user</span><span style="position:static;color:#179fff">()</span><span style="position:static;color:#d4d4d4">;</span></div>
<div class="ln" style="left:0;top:419px;left:-0.4px;color:#858585">20</div>
<div class="code" style="left:67px;top:419px"><span style="position:static;color:#da70d6">}</span><span style="position:static;color:#ffd700">)</span><span style="position:static;color:#d4d4d4">;</span></div>
<div class="ln" style="left:0;top:438px;left:-0.4px;color:#858585">21</div>
<div class="ln" style="left:0;top:457px;left:-0.4px;color:#858585">22</div>
<div class="code" style="left:67px;top:457px"><span style="position:static;color:#4ec9b0">Route</span><span style="position:static;color:#d4d4d4">::</span><span style="position:static;color:#dcdcaa">get</span><span style="position:static;color:#ffd700">(</span><span style="position:static;color:#ce9178">&#x27;/helloWorld&#x27;</span><span style="position:static;color:#d4d4d4">, </span><span style="position:static;color:#da70d6">[</span><span style="position:static;color:#4ec9b0">HelloWorld</span><span style="position:static;color:#d4d4d4">::</span><span style="position:static;color:#569cd6">class</span><span style="position:static;color:#d4d4d4">, </span><span style="position:static;color:#ce9178">&#x27;helloWorld&#x27;</span><span style="position:static;color:#da70d6">]</span><span style="position:static;color:#ffd700">)</span><span style="position:static;color:#d4d4d4">;</span></div>
<div class="ln" style="left:0;top:476px;left:-0.4px;color:#858585">23</div>
<div class="code" style="left:67px;top:476px"><span style="position:static;color:#4ec9b0">Route</span><span style="position:static;color:#d4d4d4">::</span><span style="position:static;color:#dcdcaa">get</span><span style="position:static;color:#ffd700">(</span><span style="position:static;color:#ce9178">&#x27;/helloWorldAgain&#x27;</span><span style="position:static;color:#d4d4d4">, </span><span style="position:static;color:#da70d6">[</span><span style="position:static;color:#4ec9b0">HelloWorld</span><span style="position:static;color:#d4d4d4">::</span><span style="position:static;color:#569cd6">class</span><span style="position:static;color:#d4d4d4">, </span><span style="position:static;color:#ce9178">&#x27;helloWorldAgain&#x27;</span><span style="position:static;color:#da70d6">]</span><span style="position:static;color:#ffd700">)</span><span style="position:static;color:#d4d4d4">;</span></div>
<div class="ln" style="left:0;top:495px;left:-0.4px;color:#c6c6c6">24</div>
<svg style="left:1434px;top:57px;opacity:0.52" width="100" height="60" viewBox="0 0 100 60" shape-rendering="crispEdges"><rect x="0" y="0" width="2" height="2" fill="#569cd6" fill-opacity="0.55"/><rect x="2" y="0" width="3" height="2" fill="#569cd6" fill-opacity="0.7"/><rect x="0" y="4" width="3" height="2" fill="#569cd6" fill-opacity="0.7"/><rect x="4" y="4" width="1" height="2" fill="#d4d4d4" fill-opacity="0.75"/><rect x="5" y="4" width="9" height="2" fill="#d4d4d4" fill-opacity="0.7"/><rect x="14" y="4" width="1" height="2" fill="#d4d4d4" fill-opacity="0.55"/><rect x="15" y="4" width="1" height="2" fill="#d4d4d4" fill-opacity="0.75"/><rect x="16" y="4" width="3" height="2" fill="#d4d4d4" fill-opacity="0.7"/><rect x="19" y="4" width="1" height="2" fill="#d4d4d4" fill-opacity="0.55"/><rect x="20" y="4" width="1" height="2" fill="#4ec9b0" fill-opacity="0.75"/><rect x="21" y="4" width="6" height="2" fill="#4ec9b0" fill-opacity="0.7"/><rect x="27" y="4" width="1" height="2" fill="#d4d4d4" fill-opacity="0.4"/><rect x="0" y="6" width="3" height="2" fill="#569cd6" fill-opacity="0.7"/><rect x="4" y="6" width="1" height="2" fill="#d4d4d4" fill-opacity="0.75"/><rect x="5" y="6" width="9" height="2" fill="#d4d4d4" fill-opacity="0.7"/><rect x="14" y="6" width="1" height="2" fill="#d4d4d4" fill-opacity="0.55"/><rect x="15" y="6" width="1" height="2" fill="#d4d4d4" fill-opacity="0.75"/><rect x="16" y="6" width="6" height="2" fill="#d4d4d4" fill-opacity="0.7"/><rect x="22" y="6" width="1" height="2" fill="#d4d4d4" fill-opacity="0.55"/><rect x="23" y="6" width="1" height="2" fill="#d4d4d4" fill-opacity="0.75"/><rect x="24" y="6" width="6" height="2" fill="#d4d4d4" fill-opacity="0.7"/><rect x="30" y="6" width="1" height="2" fill="#d4d4d4" fill-opacity="0.55"/><rect x="31" y="6" width="1" height="2" fill="#4ec9b0" fill-opacity="0.75"/><rect x="32" y="6" width="4" height="2" fill="#4ec9b0" fill-opacity="0.7"/><rect x="36" y="6" width="1" height="2" fill="#d4d4d4" fill-opacity="0.4"/><rect x="0" y="8" width="3" height="2" fill="#569cd6" fill-opacity="0.7"/><rect x="4" y="8" width="1" height="2" fill="#d4d4d4" fill-opacity="0.75"/><rect x="5" y="8" width="2" height="2" fill="#d4d4d4" fill-opacity="0.7"/><rect x="7" y="8" width="1" height="2" fill="#d4d4d4" fill-opacity="0.55"/><rect x="8" y="8" width="1" height="2" fill="#d4d4d4" fill-opacity="0.75"/><rect x="9" y="8" width="3" height="2" fill="#d4d4d4" fill-opacity="0.7"/><rect x="12" y="8" width="1" height="2" fill="#d4d4d4" fill-opacity="0.55"/><rect x="13" y="8" width="1" height="2" fill="#d4d4d4" fill-opacity="0.75"/><rect x="14" y="8" width="10" height="2" fill="#d4d4d4" fill-opacity="0.7"/><rect x="24" y="8" width="1" height="2" fill="#d4d4d4" fill-opacity="0.55"/><rect x="25" y="8" width="1" height="2" fill="#4ec9b0" fill-opacity="0.75"/><rect x="26" y="8" width="4" height="2" fill="#4ec9b0" fill-opacity="0.7"/><rect x="30" y="8" width="1" height="2" fill="#4ec9b0" fill-opacity="0.75"/><rect x="31" y="8" width="4" height="2" fill="#4ec9b0" fill-opacity="0.7"/><rect x="35" y="8" width="1" height="2" fill="#d4d4d4" fill-opacity="0.4"/><rect x="0" y="12" width="2" height="2" fill="#6a9955" fill-opacity="0.55"/><rect x="0" y="14" width="1" height="2" fill="#6a9955" fill-opacity="0.55"/><rect x="1" y="14" width="74" height="2" fill="#6a9955" fill-opacity="0.35"/><rect x="0" y="16" width="1" height="2" fill="#6a9955" fill-opacity="0.55"/><rect x="2" y="16" width="3" height="2" fill="#6a9955" fill-opacity="0.75"/><rect x="6" y="16" width="1" height="2" fill="#6a9955" fill-opacity="0.75"/><rect x="7" y="16" width="5" height="2" fill="#6a9955" fill-opacity="0.7"/><rect x="0" y="18" width="1" height="2" fill="#6a9955" fill-opacity="0.55"/><rect x="1" y="18" width="74" height="2" fill="#6a9955" fill-opacity="0.35"/><rect x="0" y="20" width="1" height="2" fill="#6a9955" fill-opacity="0.55"/><rect x="0" y="22" width="1" height="2" fill="#6a9955" fill-opacity="0.55"/><rect x="2" y="22" width="1" height="2" fill="#6a9955" fill-opacity="0.75"/><rect x="3" y="22" width="3" height="2" fill="#6a9955" fill-opacity="0.7"/><rect x="7" y="22" width="2" height="2" fill="#6a9955" fill-opacity="0.7"/><rect x="10" y="22" width="5" height="2" fill="#6a9955" fill-opacity="0.7"/><rect x="16" y="22" width="3" height="2" fill="#6a9955" fill-opacity="0.7"/><rect x="20" y="22" width="3" height="2" fill="#6a9955" fill-opacity="0.7"/><rect x="24" y="22" width="8" height="2" fill="#6a9955" fill-opacity="0.7"/><rect x="33" y="22" width="3" height="2" fill="#6a9955" fill-opacity="0.75"/><rect x="37" y="22" width="6" height="2" fill="#6a9955" fill-opacity="0.7"/><rect x="44" y="22" width="3" height="2" fill="#6a9955" fill-opacity="0.7"/><rect x="48" y="22" width="4" height="2" fill="#6a9955" fill-opacity="0.7"/><rect x="53" y="22" width="11" height="2" fill="#6a9955" fill-opacity="0.7"/><rect x="64" y="22" width="1" height="2" fill="#6a9955" fill-opacity="0.4"/><rect x="66" y="22" width="1" height="2" fill="#6a9955" fill-opacity="0.75"/><rect x="67" y="22" width="4" height="2" fill="#6a9955" fill-opacity="0.7"/><rect x="0" y="24" width="1" height="2" fill="#6a9955" fill-opacity="0.55"/><rect x="2" y="24" width="6" height="2" fill="#6a9955" fill-opacity="0.7"/><rect x="9" y="24" width="3" height="2" fill="#6a9955" fill-opacity="0.7"/><rect x="13" y="24" width="6" height="2" fill="#6a9955" fill-opacity="0.7"/><rect x="20" y="24" width="2" height="2" fill="#6a9955" fill-opacity="0.7"/><rect x="23" y="24" width="3" height="2" fill="#6a9955" fill-opacity="0.7"/><rect x="27" y="24" width="1" height="2" fill="#6a9955" fill-opacity="0.75"/><rect x="28" y="24" width="4" height="2" fill="#6a9955" fill-opacity="0.7"/><rect x="32" y="24" width="1" height="2" fill="#6a9955" fill-opacity="0.75"/><rect x="33" y="24" width="6" height="2" fill="#6a9955" fill-opacity="0.7"/><rect x="39" y="24" width="1" height="2" fill="#6a9955" fill-opacity="0.75"/><rect x="40" y="24" width="7" height="2" fill="#6a9955" fill-opacity="0.7"/><rect x="48" y="24" width="3" height="2" fill="#6a9955" fill-opacity="0.7"/><rect x="52" y="24" width="3" height="2" fill="#6a9955" fill-opacity="0.7"/><rect x="56" y="24" width="2" height="2" fill="#6a9955" fill-opacity="0.7"/><rect x="59" y="24" width="4" height="2" fill="#6a9955" fill-opacity="0.7"/><rect x="64" y="24" width="4" height="2" fill="#6a9955" fill-opacity="0.7"/><rect x="0" y="26" width="1" height="2" fill="#6a9955" fill-opacity="0.55"/><rect x="2" y="26" width="2" height="2" fill="#6a9955" fill-opacity="0.7"/><rect x="5" y="26" width="8" height="2" fill="#6a9955" fill-opacity="0.7"/><rect x="14" y="26" width="2" height="2" fill="#6a9955" fill-opacity="0.7"/><rect x="17" y="26" width="3" height="2" fill="#6a9955" fill-opacity="0.7"/><rect x="21" y="26" width="1" height="2" fill="#6a9955" fill-opacity="0.4"/><rect x="22" y="26" width="3" height="2" fill="#6a9955" fill-opacity="0.7"/><rect x="25" y="26" width="1" height="2" fill="#6a9955" fill-opacity="0.4"/><rect x="27" y="26" width="10" height="2" fill="#6a9955" fill-opacity="0.7"/><rect x="38" y="26" width="5" height="2" fill="#6a9955" fill-opacity="0.7"/><rect x="43" y="26" width="1" height="2" fill="#6a9955" fill-opacity="0.4"/><rect x="45" y="26" width="1" height="2" fill="#6a9955" fill-opacity="0.75"/><rect x="46" y="26" width="3" height="2" fill="#6a9955" fill-opacity="0.7"/><rect x="50" y="26" width="9" height="2" fill="#6a9955" fill-opacity="0.7"/><rect x="60" y="26" width="5" height="2" fill="#6a9955" fill-opacity="0.7"/><rect x="65" y="26" width="1" height="2" fill="#6a9955" fill-opacity="0.55"/><rect x="0" y="28" width="1" height="2" fill="#6a9955" fill-opacity="0.55"/><rect x="0" y="30" width="2" height="2" fill="#6a9955" fill-opacity="0.55"/><rect x="0" y="34" width="1" height="2" fill="#4ec9b0" fill-opacity="0.75"/><rect x="1" y="34" width="4" height="2" fill="#4ec9b0" fill-opacity="0.7"/><rect x="5" y="34" width="2" height="2" fill="#d4d4d4" fill-opacity="0.4"/><rect x="7" y="34" width="10" height="2" fill="#dcdcaa" fill-opacity="0.7"/><rect x="17" y="34" width="1" height="2" fill="#d4d4d4" fill-opacity="0.55"/><rect x="18" y="34" width="1" height="2" fill="#ce9178" fill-opacity="0.4"/><rect x="19" y="34" width="4" height="2" fill="#ce9178" fill-opacity="0.7"/><rect x="23" y="34" width="1" height="2" fill="#ce9178" fill-opacity="0.4"/><rect x="24" y="34" width="7" height="2" fill="#ce9178" fill-opacity="0.7"/><rect x="31" y="34" width="1" height="2" fill="#ce9178" fill-opacity="0.4"/><rect x="32" y="34" width="1" height="2" fill="#d4d4d4" fill-opacity="0.55"/><rect x="33" y="34" width="1" height="2" fill="#d4d4d4" fill-opacity="0.35"/><rect x="34" y="34" width="1" height="2" fill="#d4d4d4" fill-opacity="0.55"/><rect x="35" y="34" width="3" height="2" fill="#dcdcaa" fill-opacity="0.7"/><rect x="38" y="34" width="1" height="2" fill="#d4d4d4" fill-opacity="0.55"/><rect x="39" y="34" width="1" height="2" fill="#ce9178" fill-opacity="0.4"/><rect x="40" y="34" width="1" height="2" fill="#ce9178" fill-opacity="0.55"/><rect x="41" y="34" width="4" height="2" fill="#ce9178" fill-opacity="0.7"/><rect x="45" y="34" width="1" height="2" fill="#ce9178" fill-opacity="0.4"/><rect x="46" y="34" width="1" height="2" fill="#d4d4d4" fill-opacity="0.4"/><rect x="48" y="34" width="8" height="2" fill="#569cd6" fill-opacity="0.7"/><rect x="57" y="34" width="1" height="2" fill="#d4d4d4" fill-opacity="0.55"/><rect x="58" y="34" width="1" height="2" fill="#4ec9b0" fill-opacity="0.75"/><rect x="59" y="34" width="6" height="2" fill="#4ec9b0" fill-opacity="0.7"/><rect x="66" y="34" width="1" height="2" fill="#9cdcfe" fill-opacity="0.55"/><rect x="67" y="34" width="7" height="2" fill="#9cdcfe" fill-opacity="0.7"/><rect x="74" y="34" width="1" height="2" fill="#d4d4d4" fill-opacity="0.55"/><rect x="76" y="34" width="1" height="2" fill="#d4d4d4" fill-opacity="0.55"/><rect x="4" y="36" width="6" height="2" fill="#c586c0" fill-opacity="0.7"/><rect x="11" y="36" width="1" height="2" fill="#9cdcfe" fill-opacity="0.55"/><rect x="12" y="36" width="7" height="2" fill="#9cdcfe" fill-opacity="0.7"/><rect x="19" y="36" width="1" height="2" fill="#d4d4d4" fill-opacity="0.35"/><rect x="20" y="36" width="1" height="2" fill="#d4d4d4" fill-opacity="0.55"/><rect x="21" y="36" width="4" height="2" fill="#dcdcaa" fill-opacity="0.7"/><rect x="25" y="36" width="2" height="2" fill="#d4d4d4" fill-opacity="0.55"/><rect x="27" y="36" width="1" height="2" fill="#d4d4d4" fill-opacity="0.4"/><rect x="0" y="38" width="2" height="2" fill="#d4d4d4" fill-opacity="0.55"/><rect x="2" y="38" width="1" height="2" fill="#d4d4d4" fill-opacity="0.4"/><rect x="0" y="42" width="1" height="2" fill="#4ec9b0" fill-opacity="0.75"/><rect x="1" y="42" width="4" height="2" fill="#4ec9b0" fill-opacity="0.7"/><rect x="5" y="42" width="2" height="2" fill="#d4d4d4" fill-opacity="0.4"/><rect x="7" y="42" width="3" height="2" fill="#dcdcaa" fill-opacity="0.7"/><rect x="10" y="42" width="1" height="2" fill="#d4d4d4" fill-opacity="0.55"/><rect x="11" y="42" width="1" height="2" fill="#ce9178" fill-opacity="0.4"/><rect x="12" y="42" width="1" height="2" fill="#ce9178" fill-opacity="0.55"/><rect x="13" y="42" width="5" height="2" fill="#ce9178" fill-opacity="0.7"/><rect x="18" y="42" width="1" height="2" fill="#ce9178" fill-opacity="0.75"/><rect x="19" y="42" width="4" height="2" fill="#ce9178" fill-opacity="0.7"/><rect x="23" y="42" width="1" height="2" fill="#ce9178" fill-opacity="0.4"/><rect x="24" y="42" width="1" height="2" fill="#d4d4d4" fill-opacity="0.4"/><rect x="26" y="42" width="1" height="2" fill="#d4d4d4" fill-opacity="0.55"/><rect x="27" y="42" width="1" height="2" fill="#4ec9b0" fill-opacity="0.75"/><rect x="28" y="42" width="4" height="2" fill="#4ec9b0" fill-opacity="0.7"/><rect x="32" y="42" width="1" height="2" fill="#4ec9b0" fill-opacity="0.75"/><rect x="33" y="42" width="4" height="2" fill="#4ec9b0" fill-opacity="0.7"/><rect x="37" y="42" width="2" height="2" fill="#d4d4d4" fill-opacity="0.4"/><rect x="39" y="42" width="5" height="2" fill="#569cd6" fill-opacity="0.7"/><rect x="44" y="42" width="1" height="2" fill="#d4d4d4" fill-opacity="0.4"/><rect x="46" y="42" width="1" height="2" fill="#ce9178" fill-opacity="0.4"/><rect x="47" y="42" width="5" height="2" fill="#ce9178" fill-opacity="0.7"/><rect x="52" y="42" width="1" height="2" fill="#ce9178" fill-opacity="0.75"/><rect x="53" y="42" width="4" height="2" fill="#ce9178" fill-opacity="0.7"/><rect x="57" y="42" width="1" height="2" fill="#ce9178" fill-opacity="0.4"/><rect x="58" y="42" width="2" height="2" fill="#d4d4d4" fill-opacity="0.55"/><rect x="60" y="42" width="1" height="2" fill="#d4d4d4" fill-opacity="0.4"/><rect x="0" y="44" width="1" height="2" fill="#4ec9b0" fill-opacity="0.75"/><rect x="1" y="44" width="4" height="2" fill="#4ec9b0" fill-opacity="0.7"/><rect x="5" y="44" width="2" height="2" fill="#d4d4d4" fill-opacity="0.4"/><rect x="7" y="44" width="3" height="2" fill="#dcdcaa" fill-opacity="0.7"/><rect x="10" y="44" width="1" height="2" fill="#d4d4d4" fill-opacity="0.55"/><rect x="11" y="44" width="1" height="2" fill="#ce9178" fill-opacity="0.4"/><rect x="12" y="44" width="1" height="2" fill="#ce9178" fill-opacity="0.55"/><rect x="13" y="44" width="5" height="2" fill="#ce9178" fill-opacity="0.7"/><rect x="18" y="44" width="1" height="2" fill="#ce9178" fill-opacity="0.75"/><rect x="19" y="44" width="4" height="2" fill="#ce9178" fill-opacity="0.7"/><rect x="23" y="44" width="1" height="2" fill="#ce9178" fill-opacity="0.75"/><rect x="24" y="44" width="4" height="2" fill="#ce9178" fill-opacity="0.7"/><rect x="28" y="44" width="1" height="2" fill="#ce9178" fill-opacity="0.4"/><rect x="29" y="44" width="1" height="2" fill="#d4d4d4" fill-opacity="0.4"/><rect x="31" y="44" width="1" height="2" fill="#d4d4d4" fill-opacity="0.55"/><rect x="32" y="44" width="1" height="2" fill="#4ec9b0" fill-opacity="0.75"/><rect x="33" y="44" width="4" height="2" fill="#4ec9b0" fill-opacity="0.7"/><rect x="37" y="44" width="1" height="2" fill="#4ec9b0" fill-opacity="0.75"/><rect x="38" y="44" width="4" height="2" fill="#4ec9b0" fill-opacity="0.7"/><rect x="42" y="44" width="2" height="2" fill="#d4d4d4" fill-opacity="0.4"/><rect x="44" y="44" width="5" height="2" fill="#569cd6" fill-opacity="0.7"/><rect x="49" y="44" width="1" height="2" fill="#d4d4d4" fill-opacity="0.4"/><rect x="51" y="44" width="1" height="2" fill="#ce9178" fill-opacity="0.4"/><rect x="52" y="44" width="5" height="2" fill="#ce9178" fill-opacity="0.7"/><rect x="57" y="44" width="1" height="2" fill="#ce9178" fill-opacity="0.75"/><rect x="58" y="44" width="4" height="2" fill="#ce9178" fill-opacity="0.7"/><rect x="62" y="44" width="1" height="2" fill="#ce9178" fill-opacity="0.75"/><rect x="63" y="44" width="4" height="2" fill="#ce9178" fill-opacity="0.7"/><rect x="67" y="44" width="1" height="2" fill="#ce9178" fill-opacity="0.4"/><rect x="68" y="44" width="2" height="2" fill="#d4d4d4" fill-opacity="0.55"/><rect x="70" y="44" width="1" height="2" fill="#d4d4d4" fill-opacity="0.4"/></svg>
<div style="left:1546px;top:57px;width:1px;height:917px;background:#383838"></div>
<div style="left:1546px;top:57px;width:14px;height:621px;background:#444444"></div>
<div style="left:1546px;top:57px;width:1px;height:621px;background:#585858"></div>
<div style="left:1547px;top:352px;width:13px;height:2px;background:#8a8a8a"></div>
</div>
<div id="sline"></div>
<div id="status">
<div style="left:0;top:0;width:34px;height:22px;background:#16825d"></div>
<svg style="left:11px;top:4px" width="13" height="14" viewBox="0 0 13 14" fill="none" stroke="#ffffff" stroke-width="1.2">
<path d="M1.2 5.5l4 3.8-4 4M11 1.2l-4 3.5 4 3.5"/></svg>
<svg style="left:41px;top:4px" width="15" height="15" viewBox="0 0 15 15" fill="none" stroke="#ffffff" stroke-width="1.1">
<circle cx="7.5" cy="7.5" r="6"/><path d="M5 5l5 5M10 5l-5 5"/></svg>
<div class="st" style="left:58px;top:1px">0</div>
<svg style="left:69px;top:4px" width="15" height="15" viewBox="0 0 15 15" fill="none" stroke="#ffffff" stroke-width="1.1" stroke-linejoin="round">
<path d="M7.5 1.3L13.6 13H1.4z"/><path d="M7.5 5.5v4M7.5 10.6v1"/></svg>
<div class="st" style="left:86px;top:1px">0</div>
<svg style="left:109px;top:4px" width="14" height="14" viewBox="0 0 14 14" fill="none" stroke="#ffffff" stroke-width="1.1">
<path d="M3 2.2a6 6 0 0 0 0 7.6M11 2.2a6 6 0 0 1 0 7.6M4.8 3.6a3.5 3.5 0 0 0 0 4.8M9.2 3.6a3.5 3.5 0 0 1 0 4.8"/><circle cx="7" cy="6" r="1"/><path d="M7 6.5L4.5 13.5M7 6.5l2.5 7M5.3 11h3.4"/></svg>
<div class="st" style="left:126px;top:1px">0</div>
<div class="st" style="left:1563px;top:1px;transform:scaleX(0.94);transform-origin:0 0">Ln 24, Col 1</div>
<div class="st" style="left:1640.5px;top:1px;transform:scaleX(0.915);transform-origin:0 0">Spaces: 4</div>
<div class="st" style="left:1705.5px;top:1px;transform:scaleX(0.98);transform-origin:0 0">UTF-8</div>
<div class="st" style="left:1753px;top:1px;transform:scaleX(0.95);transform-origin:0 0">LF</div>
<div class="st" style="left:1780.5px;top:1px;transform:scaleX(1.0);transform-origin:0 0">PHP</div>
<div class="st" style="left:1835.5px;top:1px;transform:scaleX(0.96);transform-origin:0 0">Go Live</div>
<svg style="left:1819px;top:4px" width="13" height="15" viewBox="0 0 13 15" fill="none" stroke="#ffffff" stroke-width="1.1">
<path d="M3.2 10.2A4.9 4.9 0 1 1 9.8 10.2"/><path d="M4.5 8.6A2.6 2.6 0 1 1 8.5 8.6"/><path d="M6.5 6.8v6.6" stroke-width="2" stroke-linecap="round"/></svg>
<svg style="left:1891px;top:3px" width="14" height="15" viewBox="0 0 14 15" fill="none" stroke="#ffffff" stroke-width="1.05">
<path d="M1.6 11.6h10.8l-1.4-2.2V6.2a4 4 0 0 0-8 0v3.2z"/><path d="M5.8 12.6a1.3 1.3 0 0 0 2.4 0"/></svg>
</div>
<div id="bottom"></div>
</body></html>
